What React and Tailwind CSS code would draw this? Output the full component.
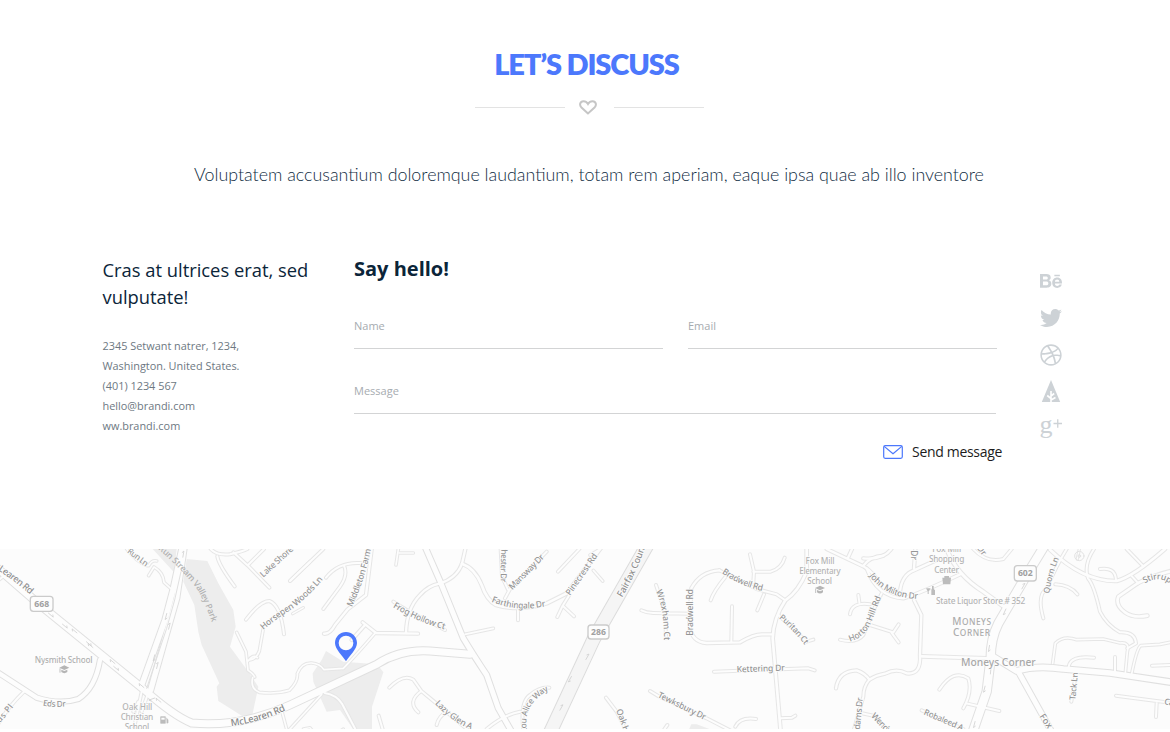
import React from "react";
import { FaBehance, FaTwitter, FaDribbble } from "react-icons/fa";

// Map tiles share one canvas; each tile is shifted by its own x origin.
const A = 0;
const B = 870;
const C = 1740;
const D = 2610;

// [tile, path, width]
const roads = [
  // small streets, west
  [A, "M-10 110 L12 92", 10],
  [A, "M380 12 Q410 52 442 62 M446 92 L462 66 Q490 82 492 112 L512 130 M446 62 Q456 44 470 48", 9],
  [A, "M632 12 Q650 32 690 28 Q730 18 742 12 M652 34 Q656 60 704 124 M700 22 L744 62 L808 128 M744 60 L792 12 M872 106 L930 50", 10],
  [A, "M738 224 Q780 168 808 168 Q842 180 852 268", 10],
  [A, "M790 250 L778 318 Q768 345 742 346 M710 262 L738 320 L744 376 Q760 386 764 396 M744 348 Q760 326 772 338", 9],
  [A, "M758 398 Q750 430 778 442 Q830 448 868 436 Q895 410 892 386 Q905 352 935 354 Q960 356 972 374 L1030 370 Q1060 340 1124 266", 9],
  [A, "M-10 380 L110 458 Q180 480 235 462 Q286 430 300 345", 17],
  [A, "M72 440 Q20 490 -10 545", 10],
  [A, "M846 500 L862 560 M870 552 L965 448", 9],
  [A, "M425 440 L400 560 M446 440 L425 500 M415 470 L400 500", 10],
  // centre west
  [B, "M0 108 L100 12 M100 192 L150 125 Q175 90 162 62 M108 98 Q145 50 212 54", 10],
  [B, "M8 206 L40 188", 8],
  [B, "M102 266 Q120 268 135 240 L172 194 L228 150 L245 12", 11],
  [B, "M218 232 L258 264 L384 266 M225 240 L185 285 M348 264 Q350 190 390 150 Q415 122 448 116 Q500 100 516 56 L526 12", 11],
  [B, "M318 60 L325 12 M328 24 L370 24", 9],
  [B, "M516 56 Q555 70 575 120 Q590 165 618 180 Q690 200 770 175 L830 145 L930 12", 12],
  [B, "M645 160 L660 132 L770 20 M632 12 L636 95 L654 134 M804 80 L868 12 M684 196 L684 226 M802 216 L818 182 L838 150 M818 182 L852 214", 10],
  [B, "M525 268 L610 250", 9],
  [B, "M298 428 Q340 385 370 404 L394 438 L440 476 L540 560 M394 438 Q350 470 385 502 M440 540 Q445 515 470 500", 10],
  [B, "M266 512 L280 560 M590 552 Q640 510 690 500 M700 552 Q690 470 720 450 Q750 425 778 428", 10],
  [B, "M104 444 Q140 450 156 476 L200 560", 10],
  [B, "M40 552 L60 548 L70 560 M148 560 L160 552", 8],
  [B, "M310 170 L350 195 L465 255", 10],
  // centre east
  [C, "M40 76 L68 108 M30 30 L62 12", 9],
  [C, "M228 120 L255 200 L258 280 M184 196 Q200 204 220 204 L330 206", 10],
  [C, "M418 76 Q360 80 334 130 L328 240 Q335 292 380 294 L480 292 Q520 268 546 268 L578 268", 11],
  [C, "M456 184 L454 290 M418 76 L530 132 L590 148 L616 166 M392 166 Q400 140 436 96 M532 196 L552 148", 10],
  [C, "M510 28 L522 80 L520 112 M520 80 L572 80 Q605 70 614 38", 10],
  [C, "M680 12 L680 80 Q655 140 616 166 Q580 220 578 280 L590 420 L602 560", 12],
  [C, "M595 210 L680 290 L700 284 M402 380 L560 374 L685 370 L704 376 M602 520 L636 518 L646 512", 10],
  [C, "M210 438 L238 455 L380 520 L450 556 M78 458 L110 500 L140 560 M466 545 Q480 515 528 522 M248 560 L262 540", 10],
  [C, "M740 12 L850 64 Q880 80 900 120 M804 38 L816 12 M850 62 Q870 35 910 32", 11],
  [C, "M780 284 Q830 296 850 270 L878 200 L905 145 M810 208 Q815 170 870 178 M835 150 L838 172 M870 240 L940 262 L956 238 M934 262 L956 292", 10],
  [C, "M768 430 Q775 378 830 376 Q856 385 868 404 Q890 390 915 386 Q950 368 980 385 Q1024 390 1020 330 L1024 210 L1002 165", 11],
  [C, "M868 404 Q850 425 850 455 L820 560 M846 505 L880 512 L920 552", 10],
  // east
  [D, "M-20 40 Q40 45 64 12 M132 70 L136 14 M90 140 Q95 90 132 76 L200 45 M-10 70 Q20 155 100 160 Q150 145 270 88", 11],
  [D, "M230 12 Q260 90 340 140 L408 190", 13],
  [D, "M310 12 Q350 55 400 42 L425 12 M520 220 Q500 150 530 130 M556 118 Q600 120 622 148 M530 130 Q560 60 590 12", 10],
  [D, "M540 14 Q640 110 740 108 Q790 95 885 12", 12],
  [D, "M818 62 L770 12 M805 115 L786 94 M690 72 Q735 65 738 104 M672 12 Q640 60 654 100 Q672 120 690 200 Q710 240 750 262 Q795 260 798 295 L772 310", 10],
  [D, "M940 70 Q860 85 804 114 L745 155 Q735 180 765 202 Q790 220 832 212", 12],
  [D, "M155 334 L350 340", 12],
  [D, "M548 355 L556 295 Q580 270 620 284 L700 282 L750 294 Q780 290 772 320 L766 384 M784 392 Q800 310 812 302 L870 298 L910 290", 9],
  [D, "M596 366 Q600 330 672 338 M735 336 L735 384 M846 362 L910 360 M618 384 L604 470", 10],
  [D, "M208 434 Q250 370 295 400 Q308 440 280 490 M288 475 L388 498 M155 496 L280 552 M738 452 L920 476 M860 474 L858 516", 10],
  [D, "M628 12 L622 42", 8],
  // avenues
  [B, "M405 5 L450 108 L520 280 Q550 330 590 390 L625 490 L665 560", 19],
  [D, "M370 335 L440 378 Q500 360 580 372 L720 384 L920 414", 21],
  [D, "M445 380 L545 560", 19],
  [A, "M548 0 L520 130 L495 225 L425 420", 20],
  [A, "M552 10 L530 160 L500 265 L452 435", 20],
  [D, "M525 0 L470 90 L385 235 Q362 280 362 340 L350 440 L305 570", 29],
  [A, "M-30 50 L120 180 L430 432 Q520 512 575 534 Q720 548 870 480 L1130 358 Q1200 312 1290 318 L1410 328", 25],
];

const parks = [
  "M458 12H530L522 82Z",
  "M560 42L622 48L655 115L700 195L707 245L690 305L745 380L775 425L755 520L730 515L655 468L650 425L658 415L605 300L595 260L583 180L550 110Z",
  "M978 318L1030 350L1132 358L1150 382L1116 485V560H1065L1020 495L980 500L940 410L938 385L965 345Z",
  "M2064 560L2074 538H2090L2150 560Z",
];

// [tile, text, baseline path, size, length, colour]
const streetNames = [
  [A, "Learen Rd", "M-6 76 Q44 108 92 150", 28, 121, "#909090"],
  [A, "Run Ln", "M380 22 L438 66", 25, 72, "#9a9a9a"],
  [A, "Run Stream Valley Park", "M474 12 Q545 72 590 130 Q615 170 640 245", 26, 278, "#b0b0b0"],
  [A, "Lake Shore", "M790 98 L884 12", 26, 124, "#9a9a9a"],
  [A, "Horsepen Woods Ln", "M790 255 Q830 220 880 190 Q925 155 970 102", 26, 236, "#969696"],
  [A, "Eds Dr", "M128 482 Q165 488 198 484", 25, 70, "#969696"],
  [A, "Eds Pl", "M-10 546 L42 484", 25, 78, "#969696"],
  [A, "McLearen Rd", "M694 544 Q780 532 858 496", 29, 171, "#888888"],
  [B, "Middleton Farm", "M186 187 Q226 100 243 12", 26, 184, "#969696"],
  [B, "Frog Hollow Ct", "M308 186 Q380 230 465 254", 26, 170, "#969696"],
  [B, "Lazy Glen A", "M434 476 Q485 530 545 555", 26, 135, "#969696"],
  [B, "Lou Alice Way", "M712 562 Q695 480 772 438", 25, 154, "#969696"],
  [B, "Manchester Dr", "M636 -46 Q632 50 632 112", 25, 158, "#969696"],
  [B, "Mansway Dr", "M667 136 L764 38", 26, 138, "#969696"],
  [B, "Farthingale Dr", "M604 170 Q680 202 766 184", 26, 167, "#969696"],
  [B, "Pinecrest Rd", "M840 153 L924 32", 26, 147, "#969696"],
  [C, "Fairfax County", "M126 158 Q166 92 202 -10", 28, 188, "#909090"],
  [C, "Wrexham Ct", "M228 138 Q252 190 252 282", 26, 151, "#969696"],
  [C, "Bradwell Rd", "M340 272 L340 132", 26, 140, "#969696"],
  [C, "Bradwell Rd", "M425 84 Q485 125 548 138", 26, 134, "#969696"],
  [C, "Puritan Ct", "M596 220 Q640 255 672 297", 25, 112, "#969696"],
  [C, "Kettering Dr", "M470 382 L616 377", 26, 145, "#969696"],
  [C, "Tewksbury Dr", "M232 456 L372 525", 26, 157, "#969696"],
  [C, "Oak Hill", "M108 496 L140 580", 26, 90, "#969696"],
  [C, "Adams Dr", "M838 570 L849 458", 26, 112, "#969696"],
  [C, "Horton Hill Rd", "M810 290 Q860 275 878 222 L904 155", 26, 170, "#969696"],
  [D, "John Milton Dr", "M-2 92 Q45 158 144 162", 26, 168, "#969696"],
  [D, "Dr", "M124 16 L124 48", 25, 29, "#969696"],
  [D, "Dr", "M320 10 L340 36", 25, 29, "#969696"],
  [D, "Quorn Ln", "M538 146 Q545 90 568 38", 25, 110, "#969696"],
  [D, "Stirrup Rd", "M824 116 Q875 82 920 135", 26, 118, "#969696"],
  [D, "Tack Ln", "M616 466 L624 382", 25, 84, "#969696"],
  [D, "Robaleed A", "M160 508 L275 557", 25, 126, "#969696"],
  [D, "Wendy", "M2 514 L56 570", 26, 76, "#969696"],
  [D, "Fox", "M508 514 L536 556", 27, 46, "#909090"],
  [D, "Ca", "M882 478 L912 483", 25, 28, "#969696"],
];

// [x, baseline, text, size, length, weight, colour]
const places = [
  [191, 354, "Nysmith School", 25, 173, 500, "#b0b0b0"],
  [412, 494, "Oak Hill", 25, 90, 500, "#b4b4b4"],
  [411, 525, "Christian", 25, 98, 500, "#b4b4b4"],
  [411, 555, "School", 25, 74, 500, "#b4b4b4"],
  [2460, 56, "Fox Mill", 25, 87, 500, "#b4b4b4"],
  [2460, 86, "Elementary", 25, 124, 500, "#b4b4b4"],
  [2459, 116, "School", 25, 74, 500, "#b4b4b4"],
  [2840, 21, "Fox Mill", 25, 87, 500, "#b4b4b4"],
  [2840, 51, "Shopping", 25, 106, 500, "#b4b4b4"],
  [2840, 83, "Center", 25, 74, 500, "#b4b4b4"],
  [2942, 176, "State Liquor Store # 352", 25, 268, 500, "#b4b4b4"],
  [2995, 363, "Moneys Corner", 31, 224, 500, "#a8a8a8"],
];

const shields = [
  [91, 154, 68, 45, "668"],
  [1764, 240, 63, 42, "286"],
  [3043, 62, 66, 46, "602"],
];

// [x, y, angle]
const arrows = [
  [152, 210, 40], [194, 243, 40], [224, 258, 220], [266, 296, 40], [272, 302, 220], [338, 350, 220], [348, 370, 40],
  [425, 422, 220], [456, 462, 160], [476, 466, 220], [498, 214, 105], [508, 244, -75], [462, 338, 105], [472, 362, -75], [550, 28, -80],
  [1710, 402, 120], [1684, 488, -60], [1762, 336, -60],
  [3070, 124, -60], [3014, 200, 115], [2967, 310, 100], [2972, 378, -85], [2953, 432, 105], [2923, 538, 105],
];

function SchoolMark({ x, y }) {
  return (
    <g transform={`translate(${x} ${y})`} fill="#b5b5b5">
      <path d="M-15 -5L0 -12L15 -5L0 2Z" />
      <path d="M-9 1L0 5L9 1V8Q0 15 -9 8Z" />
      <path d="M-13 -3V10" stroke="#b5b5b5" strokeWidth="2.5" />
    </g>
  );
}

function AreaMap() {
  return (
    <svg
      viewBox="0 12 3510 540"
      preserveAspectRatio="none"
      className="block h-[180px] w-[1170px] overflow-hidden bg-[#fcfcfc]"
      style={{ fontFamily: '"Noto Sans", "Open Sans", sans-serif' }}
    >
      <g fill="#ededed">
        {parks.map((d) => (
          <path key={d} d={d} />
        ))}
      </g>
      <g fill="none" strokeLinecap="round" strokeLinejoin="round">
        <path d="M1950 -14L1782 280L1640 585" stroke="#dcdcdc" strokeWidth="43" />
        <path d="M1950 -14L1782 280L1640 585" stroke="#f5f5f5" strokeWidth="37" />
        {roads.map(([x, d, w], i) => (
          <path key={i} d={d} transform={`translate(${x} 0)`} stroke={w > 16 ? "#e0e0e0" : "#e6e6e6"} strokeWidth={w + 2} />
        ))}
        {roads.map(([x, d, w], i) => (
          <path key={i} d={d} transform={`translate(${x} 0)`} stroke="#fdfdfd" strokeWidth={w - 4} />
        ))}
        <path d="M543 80L524 165L500 250L440 430" stroke="#e0e0e0" strokeWidth="3" />
        <circle cx="3238" cy="33" r="14" stroke="#e3e3e3" strokeWidth="3" />
        <circle cx="3238" cy="33" r="4" stroke="#e3e3e3" strokeWidth="3" />
      </g>
      <g fill="none" stroke="#cfcfcf" strokeWidth="2.2">
        {arrows.map(([x, y, r], i) => (
          <path key={i} d="M-10 0H10M4 -5L10 0" transform={`translate(${x} ${y}) rotate(${r})`} />
        ))}
      </g>
      {streetNames.map(([x, text, d, size, len, color], i) => (
        <g key={i} transform={`translate(${x} 0)`}>
          <path id={`street-${i}`} d={d} fill="none" />
          <text
            fontSize={size}
            fill={color}
            fontWeight="500"
            stroke="#fcfcfc"
            strokeWidth="5"
            strokeLinejoin="round"
            paintOrder="stroke"
            strokeOpacity={text.startsWith("Run Stream") ? 0 : 1}
            textLength={len}
          >
            <textPath href={`#street-${i}`}>{text}</textPath>
          </text>
        </g>
      ))}
      {places.map(([x, y, text, size, len, weight, color], i) => (
        <text key={i} x={x - len / 2} y={y} fontSize={size} textLength={len} fontWeight={weight} fill={color} stroke="#fcfcfc" strokeWidth="4" paintOrder="stroke">
          {text}
        </text>
      ))}
      <g fill="#acacac" fontWeight="500">
        <text x="2857" y="241" fontSize="30" textLength="116">M<tspan fontSize="25">ONEYS</tspan></text>
        <text x="2859" y="273" fontSize="30" textLength="111">C<tspan fontSize="25">ORNER</tspan></text>
      </g>
      {shields.map(([x, y, w, h, text]) => (
        <g key={text}>
          <rect x={x} y={y} width={w} height={h} rx="9" fill="#fdfdfd" stroke="#cbcbcb" strokeWidth="4" />
          <text x={x + w / 2} y={y + h / 2 + 9} fontSize="26" fontWeight="700" fill="#a0a0a0" textAnchor="middle">
            {text}
          </text>
        </g>
      ))}
      <SchoolMark x={193} y={373} />
      <SchoolMark x={2460} y={134} />
      <g fill="#bcbcbc">
        <path d="M482 515h14v20h-14zM499 519l5 5v10h-4" stroke="#bcbcbc" strokeWidth="2" />
        <path d="M484 518h10v6h-10z" fill="#fcfcfc" />
        <path d="M2827 98h26l-2 20h-22zM2833 93h14v5h-14z" />
        <path d="M2778 130h14l-6 9v8h-3v-8zM2796 123h5v8l4 5v14h-11v-14l2-5z" />
      </g>
      <path
        fillRule="evenodd"
        fill="#4c78fc"
        d="M1038 261C1055 261 1071 275 1071 294C1071 312 1048 333 1038 349C1028 333 1005 312 1005 294C1005 275 1021 261 1038 261ZM1038 272A22 22 0 1 0 1038 316A22 22 0 1 0 1038 272Z"
      />
    </svg>
  );
}

function ForrstIcon() {
  return (
    <svg viewBox="0 0 20 22" className="h-[22px] w-5" fill="currentColor">
      <path d="M10 0L19.2 22H.8Z" />
      <path d="M10 11V22M10 18.5L6.2 15.5M10 16L13.2 13.5M10 20L14.5 17.5" stroke="#fff" strokeWidth="1.6" fill="none" />
    </svg>
  );
}

function GooglePlusIcon() {
  return (
    <svg viewBox="0 0 24 22" className="h-[22px] w-6 overflow-visible" fill="currentColor">
      <text x="0.5" y="15.5" fontSize="26" fontFamily='"Liberation Serif", serif'>g</text>
      <path d="M14.5 6.5H23M18.75 2.25V10.75" stroke="currentColor" strokeWidth="1.3" />
    </svg>
  );
}

function Field({ label, className }) {
  return (
    <label className={`block h-[31px] border-b border-[#d3d4d5] text-[11px] leading-4 text-[#a6abb0] ${className}`}>
      {label}
    </label>
  );
}

export default function App() {
  return (
    <div className="h-[732px] w-[1170px] overflow-hidden bg-white font-['Open_Sans',sans-serif]">
      <section className="flex h-[549px] flex-col">
        <header className="flex flex-col items-center pt-[46px] pl-[8px] font-[Lato,sans-serif]">
          <h2 className="mr-[5px] text-[29px] leading-9 font-extrabold tracking-[-1.1px] whitespace-nowrap text-[#4c78fc]">LET’S DISCUSS</h2>
          <div className="mt-[18px] flex h-4 w-[229px] items-center justify-between pb-px">
            <span className="h-px w-[90px] bg-[#e3e3e3]" />
            <svg viewBox="0 0 18 15" className="mr-[3px] h-[15px] w-[18px]" fill="none" stroke="#c6c6c6" strokeWidth="2">
              <path d="M9 13.4L2.2 7.2C.2 5 1 1.3 4.4 1.2C6.6 1.1 8 2.4 9 4C10 2.4 11.4 1.1 13.6 1.2C17 1.3 17.8 5 15.8 7.2Z" />
            </svg>
            <span className="h-px w-[90px] bg-[#e3e3e3]" />
          </div>
          <p className="mt-[44px] text-[17.85px] leading-7 font-light whitespace-nowrap text-[#102c3f]">
            Voluptatem accusantium doloremque laudantium, totam rem aperiam, eaque ipsa quae ab illo inventore
          </p>
        </header>

        <div className="mt-[69px] flex pl-[102px]">
          <aside className="w-[252px] text-[#0b2539]">
            <h3 className="-mt-px pl-[0.5px] text-[18.35px] leading-[27px] whitespace-nowrap">
              Cras at ultrices erat, sed
              <br />
              vulputate!
            </h3>
            <address className="mt-[26px] pl-[0.5px] text-[10.9px] leading-5 whitespace-nowrap text-[#6d7882] not-italic">
              2345 Setwant natrer, 1234,
              <br />
              Washington. United States.
              <br />
              (401) 1234 567
              <br />
              hello@brandi.com
              <br />
              ww.brandi.com
            </address>
          </aside>

          <form className="w-[648px]">
            <h3 className="text-[20px] leading-6 font-bold text-[#0b2539]">Say hello!</h3>
            <div className="mt-[37px] flex gap-[25px]">
              <Field label="Name" className="w-[309px]" />
              <Field label="Email" className="w-[309px]" />
            </div>
            <Field label="Message" className="mt-[34px] w-[642px]" />
            <button type="button" className="mt-[28px] flex w-full items-center justify-end gap-[9px] text-[14px] leading-5 tracking-[-0.32px] text-[#1c1c1c]">
              <svg viewBox="0 0 20 14" className="h-[14px] w-5" fill="none" stroke="#4c78fc" strokeWidth="1.2" strokeLinejoin="round">
                <rect x=".7" y=".7" width="18.6" height="12.6" rx="1.5" />
                <path d="M1.2 1.4L10 8.8L18.8 1.4" />
              </svg>
              Send message
            </button>
          </form>

          <nav className="ml-[35px] flex w-7 flex-col items-center gap-[14.8px] pt-[13px] text-[#cdd2d6]">
            <FaBehance className="h-[22px] w-[22px]" />
            <FaTwitter className="h-[22px] w-[22px]" />
            <FaDribbble className="h-[22px] w-[22px]" />
            <ForrstIcon />
            <GooglePlusIcon />
          </nav>
        </div>
      </section>
      <AreaMap />
    </div>
  );
}
